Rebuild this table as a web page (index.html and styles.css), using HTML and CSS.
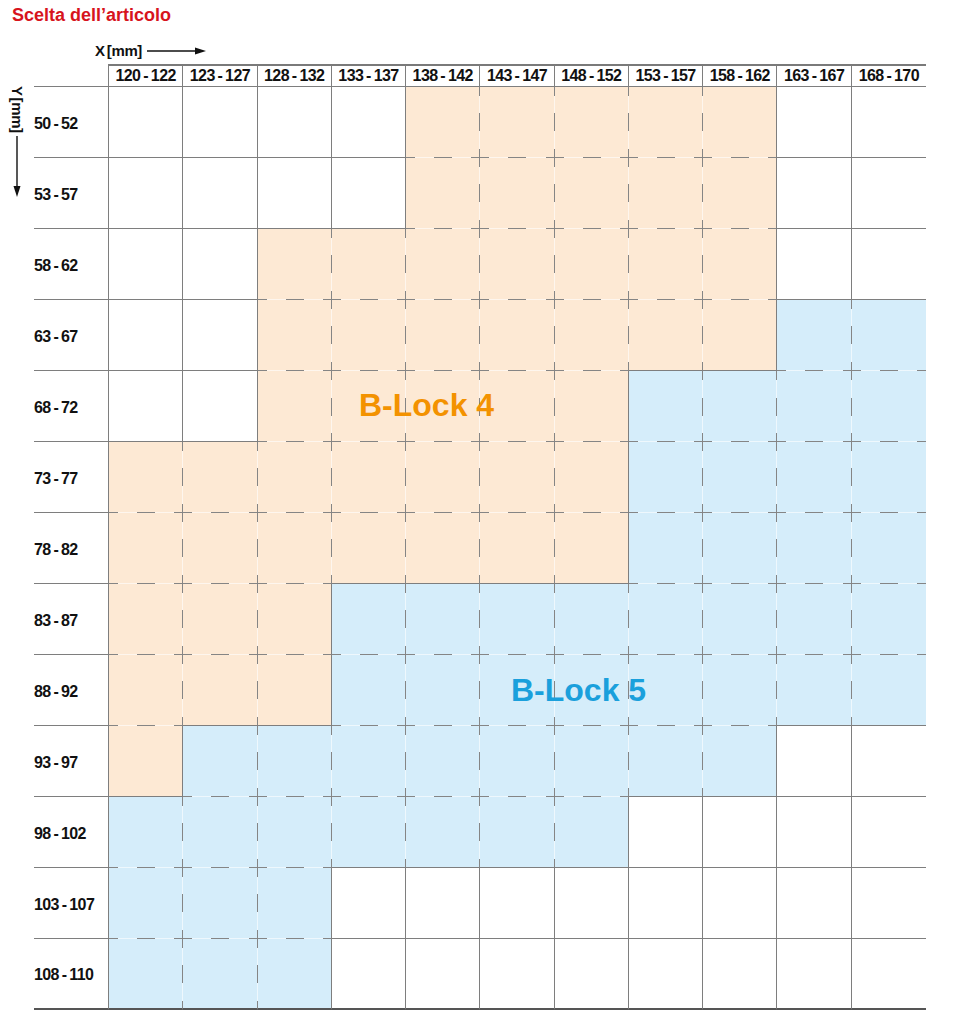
FILE: index.html
```html
<!DOCTYPE html>
<html lang="it">
<head>
<meta charset="utf-8">
<title>Scelta dell’articolo</title>
<link rel="stylesheet" href="styles.css">
</head>
<body>
<h1 class="title">Scelta dell’articolo</h1>
<div class="xaxis">
  <span class="axlab">X [mm]</span>
  <svg class="xarrow" width="60" height="10" viewBox="0 0 60 10"><line x1="0" y1="5" x2="50" y2="5" stroke="#111" stroke-width="1.4"/><path d="M48 1.5 L59 5 L48 8.5 Z" fill="#111"/></svg>
</div>
<div class="wrap">
  <div class="yaxis">
    <span class="axlab ylab">Y [mm]</span>
    <svg class="yarrow" width="10" height="62" viewBox="0 0 10 62"><line x1="5" y1="0" x2="5" y2="52" stroke="#111" stroke-width="1.4"/><path d="M1.5 50 L5 61 L8.5 50 Z" fill="#111"/></svg>
  </div>
  <div class="chart">
    <div class="hc"></div>
    <div class="h">120 - 122</div><div class="h">123 - 127</div><div class="h">128 - 132</div><div class="h">133 - 137</div><div class="h">138 - 142</div><div class="h">143 - 147</div><div class="h">148 - 152</div><div class="h">153 - 157</div><div class="h">158 - 162</div><div class="h">163 - 167</div><div class="h e">168 - 170</div>

    <div class="rl">50 - 52</div>
    <div class="c"></div><div class="c"></div><div class="c"></div><div class="c"></div><div class="c o dx dy"></div><div class="c o dx dy"></div><div class="c o dx dy"></div><div class="c o dx dy"></div><div class="c o dy"></div><div class="c"></div><div class="c e"></div>

    <div class="rl">53 - 57</div>
    <div class="c"></div><div class="c"></div><div class="c"></div><div class="c"></div><div class="c o dx dy"></div><div class="c o dx dy"></div><div class="c o dx dy"></div><div class="c o dx dy"></div><div class="c o dy"></div><div class="c"></div><div class="c e"></div>

    <div class="rl">58 - 62</div>
    <div class="c"></div><div class="c"></div><div class="c o dx dy"></div><div class="c o dx dy"></div><div class="c o dx dy"></div><div class="c o dx dy"></div><div class="c o dx dy"></div><div class="c o dx dy"></div><div class="c o dy"></div><div class="c"></div><div class="c e"></div>

    <div class="rl">63 - 67</div>
    <div class="c"></div><div class="c"></div><div class="c o dx dy"></div><div class="c o dx dy"></div><div class="c o dx dy"></div><div class="c o dx dy"></div><div class="c o dx dy"></div><div class="c o dx"></div><div class="c o"></div><div class="c b dx dy"></div><div class="c b e dy"></div>

    <div class="rl">68 - 72</div>
    <div class="c"></div><div class="c"></div><div class="c o dx dy"></div><div class="c o dx dy"></div><div class="c o dx dy"></div><div class="c o dx dy"></div><div class="c o dy"></div><div class="c b dx dy"></div><div class="c b dx dy"></div><div class="c b dx dy"></div><div class="c b e dy"></div>

    <div class="rl">73 - 77</div>
    <div class="c o dx dy"></div><div class="c o dx dy"></div><div class="c o dx dy"></div><div class="c o dx dy"></div><div class="c o dx dy"></div><div class="c o dx dy"></div><div class="c o dy"></div><div class="c b dx dy"></div><div class="c b dx dy"></div><div class="c b dx dy"></div><div class="c b e dy"></div>

    <div class="rl">78 - 82</div>
    <div class="c o dx dy"></div><div class="c o dx dy"></div><div class="c o dx dy"></div><div class="c o dx"></div><div class="c o dx"></div><div class="c o dx"></div><div class="c o"></div><div class="c b dx dy"></div><div class="c b dx dy"></div><div class="c b dx dy"></div><div class="c b e dy"></div>

    <div class="rl">83 - 87</div>
    <div class="c o dx dy"></div><div class="c o dx dy"></div><div class="c o dy"></div><div class="c b dx dy"></div><div class="c b dx dy"></div><div class="c b dx dy"></div><div class="c b dx dy"></div><div class="c b dx dy"></div><div class="c b dx dy"></div><div class="c b dx dy"></div><div class="c b e dy"></div>

    <div class="rl">88 - 92</div>
    <div class="c o dx dy"></div><div class="c o dx"></div><div class="c o"></div><div class="c b dx dy"></div><div class="c b dx dy"></div><div class="c b dx dy"></div><div class="c b dx dy"></div><div class="c b dx dy"></div><div class="c b dx dy"></div><div class="c b dx"></div><div class="c b e"></div>

    <div class="rl">93 - 97</div>
    <div class="c o"></div><div class="c b dx dy"></div><div class="c b dx dy"></div><div class="c b dx dy"></div><div class="c b dx dy"></div><div class="c b dx dy"></div><div class="c b dx dy"></div><div class="c b dx"></div><div class="c b"></div><div class="c"></div><div class="c e"></div>

    <div class="rl">98 - 102</div>
    <div class="c b dx dy"></div><div class="c b dx dy"></div><div class="c b dx dy"></div><div class="c b dx"></div><div class="c b dx"></div><div class="c b dx"></div><div class="c b"></div><div class="c"></div><div class="c"></div><div class="c"></div><div class="c e"></div>

    <div class="rl">103 - 107</div>
    <div class="c b dx dy"></div><div class="c b dx dy"></div><div class="c b dy"></div><div class="c"></div><div class="c"></div><div class="c"></div><div class="c"></div><div class="c"></div><div class="c"></div><div class="c"></div><div class="c e"></div>

    <div class="rl z">108 - 110</div>
    <div class="c b dx z"></div><div class="c b dx z"></div><div class="c b z"></div><div class="c z"></div><div class="c z"></div><div class="c z"></div><div class="c z"></div><div class="c z"></div><div class="c z"></div><div class="c z"></div><div class="c e z"></div>

    <div class="tag tag4">B-Lock 4</div>
    <div class="tag tag5">B-Lock 5</div>
  </div>
</div>
</body>
</html>
```
FILE: styles.css
```css
html, body {
  margin: 0;
  padding: 0;
  background: #fff;
}
body {
  width: 974px;
  height: 1024px;
  overflow: hidden;
  font-family: "Liberation Sans", Arial, sans-serif;
  color: #111;
}
.title {
  margin: 0;
  padding: 4px 12px 0;
  height: 22px;
  font-size: 18px;
  line-height: 22px;
  font-weight: 700;
  color: #d7141d;
}
.xaxis {
  display: flex;
  align-items: center;
  height: 20px;
  margin: 15px 0 3px 95px;
}
.axlab {
  font-size: 15px;
  font-weight: 700;
  line-height: 18px;
  letter-spacing: -0.4px;
  word-spacing: -1.5px;
  white-space: nowrap;
}
.xarrow {
  margin-left: 5px;
}
.wrap {
  display: flex;
}
.yaxis {
  width: 34px;
  display: flex;
  flex-direction: column;
  align-items: center;
  padding-top: 22px;
  box-sizing: border-box;
}
.ylab {
  writing-mode: vertical-rl;
}
.yarrow {
  margin-top: 3px;
}
.chart {
  position: relative;
  width: 892px;
  display: grid;
  grid-template-columns: 75px repeat(11, 1fr);
  grid-template-rows: 23px repeat(13, 71px);
  font-size: 16px;
  font-weight: 700;
  letter-spacing: -0.6px;
  word-spacing: -1px;
}
.chart > div {
  box-sizing: border-box;
}
.hc {
  border-bottom: 1px solid #7e7e7e;
  border-right: 1px solid #7e7e7e;
}
.h {
  border-top: 2px solid #7a7a7a;
  border-right: 1px solid #7e7e7e;
  border-bottom: 1px solid #7e7e7e;
  display: flex;
  align-items: center;
  justify-content: center;
  line-height: 18px;
  white-space: nowrap;
}
.rl {
  border-right: 1px solid #7e7e7e;
  border-bottom: 1px solid #7e7e7e;
  display: flex;
  align-items: center;
  padding-top: 3px;
  white-space: nowrap;
}
.c {
  border-right: 1px solid #7e7e7e;
  border-bottom: 1px solid #7e7e7e;
  background-color: #fff;
  background-image: var(--gx, none), var(--gy, none);
  background-size: 1px 100%, 100% 1px;
  background-position: right top, left bottom;
  background-repeat: no-repeat;
  background-origin: border-box;
}
.o { background-color: #fde9d4; }
.b { background-color: #d5edfa; }
.dx {
  border-right-color: transparent;
  --gx: linear-gradient(to bottom,
    #858585 0 9px,
    rgba(255,255,255,.6) 9px calc(50% - 9px),
    #858585 calc(50% - 9px) calc(50% + 9px),
    rgba(255,255,255,.6) calc(50% + 9px) calc(100% - 9px),
    #858585 calc(100% - 9px));
}
.dy {
  border-bottom-color: transparent;
  --gy: linear-gradient(to right,
    #858585 0 9px,
    rgba(255,255,255,.6) 9px calc(50% - 9px),
    #858585 calc(50% - 9px) calc(50% + 9px),
    rgba(255,255,255,.6) calc(50% + 9px) calc(100% - 9px),
    #858585 calc(100% - 9px));
}
.chart > .e { border-right: 0; }
.chart > .z { border-bottom: 2px solid #555; }
.tag {
  position: absolute;
  font-size: 32px;
  line-height: 36px;
  font-weight: 700;
  letter-spacing: 0;
  word-spacing: 0;
  white-space: nowrap;
}
.tag4 {
  left: 325px;
  top: 323px;
  color: #f39200;
}
.tag5 {
  left: 477px;
  top: 608px;
  color: #1aa0dc;
}
```
